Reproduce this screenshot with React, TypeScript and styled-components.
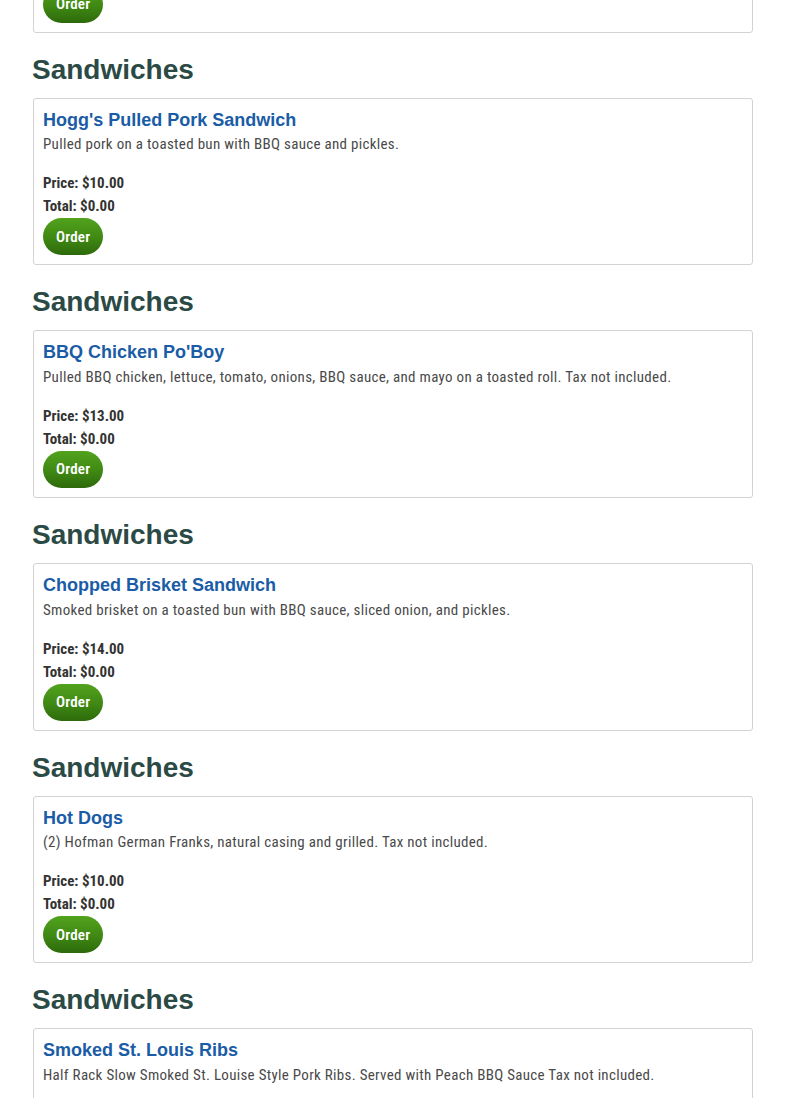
import React from "react";
import styled, { createGlobalStyle } from "styled-components";

const GlobalStyle = createGlobalStyle`
  html, body { margin: 0; padding: 0; background: #ffffff; }
  body { font-family: "Roboto Condensed", "Liberation Sans", sans-serif; }
`;

const Page = styled.main`
  padding: 0 32px;
  display: flex;
  flex-direction: column;
`;

const Section = styled.section<{ $first?: boolean }>`
  display: flex;
  flex-direction: column;
  margin-top: ${(p) => (p.$first ? "-135px" : "0")};
`;

const CategoryHeading = styled.h2`
  margin: 22px 0 13px;
  font-family: "Liberation Sans", Arial, sans-serif;
  font-weight: 700;
  font-size: 28px;
  line-height: 30px;
  color: #2b4a45;
`;

const Card = styled.article`
  margin-left: 1px;
  border: 1px solid #d2d2d2;
  border-radius: 3px;
  padding: 11px 10px 9px 9px;
  display: flex;
  flex-direction: column;
  align-items: flex-start;
  background: #fff;
`;

const ItemTitle = styled.h3`
  margin: 0 0 3px;
  font-family: "Liberation Sans", Arial, sans-serif;
  font-weight: 700;
  font-size: 18px;
  line-height: 21.6px;
  color: #1a5ca6;
`;

const Description = styled.p`
  margin: 0 0 18px;
  font-family: "Roboto Condensed", sans-serif;
  font-size: 15px;
  line-height: 20px;
  letter-spacing: 0.3px;
  color: #4a4a4a;
`;

const Amount = styled.div`
  font-family: "Roboto Condensed", sans-serif;
  font-weight: 700;
  font-size: 15px;
  line-height: 23.03px;
  color: #333;
`;

const OrderButton = styled.button`
  height: 37px;
  padding: 0 13px;
  border: none;
  border-radius: 19px;
  background: linear-gradient(to bottom, #52a21d 0%, #3f8814 55%, #2d6a0b 100%);
  color: #fff;
  font-family: "Roboto Condensed", sans-serif;
  font-weight: 600;
  font-size: 15px;
  letter-spacing: 0.2px;
  cursor: pointer;
`;

type Item = { title: string; description: string; price: string };

const items: Item[] = [
  {
    title: "Pulled Pork Plate",
    description: "Pulled pork with two sides and cornbread.",
    price: "$12.00",
  },
  {
    title: "Hogg's Pulled Pork Sandwich",
    description: "Pulled pork on a toasted bun with BBQ sauce and pickles.",
    price: "$10.00",
  },
  {
    title: "BBQ Chicken Po'Boy",
    description:
      "Pulled BBQ chicken, lettuce, tomato, onions, BBQ sauce, and mayo on a toasted roll. Tax not included.",
    price: "$13.00",
  },
  {
    title: "Chopped Brisket Sandwich",
    description: "Smoked brisket on a toasted bun with BBQ sauce, sliced onion, and pickles.",
    price: "$14.00",
  },
  {
    title: "Hot Dogs",
    description: "(2) Hofman German Franks, natural casing and grilled. Tax not included.",
    price: "$10.00",
  },
  {
    title: "Smoked St. Louis Ribs",
    description:
      "Half Rack Slow Smoked St. Louise Style Pork Ribs. Served with Peach BBQ Sauce Tax not included.",
    price: "$22.00",
  },
];

function MenuCard({ item }: { item: Item }) {
  return (
    <Card>
      <ItemTitle>{item.title}</ItemTitle>
      <Description>{item.description}</Description>
      <Amount>Price: {item.price}</Amount>
      <Amount>Total: $0.00</Amount>
      <OrderButton type="button">Order</OrderButton>
    </Card>
  );
}

export default function App() {
  return (
    <>
      <GlobalStyle />
      <Page>
        {items.map((item, i) => (
          <Section key={item.title} $first={i === 0}>
            {i > 0 && <CategoryHeading>Sandwiches</CategoryHeading>}
            <MenuCard item={item} />
          </Section>
        ))}
      </Page>
    </>
  );
}
